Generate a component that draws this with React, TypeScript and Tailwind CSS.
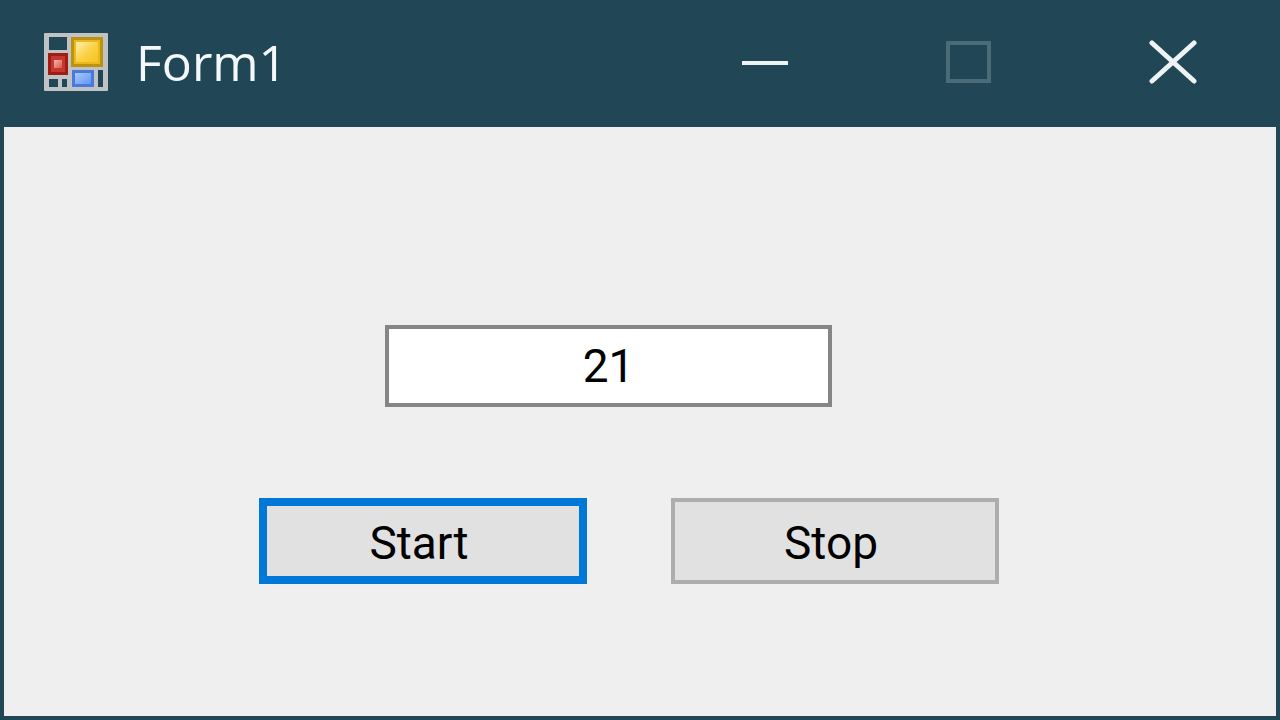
import React, { useEffect, useState } from 'react'

const FormIcon: React.FC = () => (
  <svg width="64" height="58" viewBox="0 0 64 58" aria-hidden="true">
    <defs>
      <linearGradient id="red" x1="0" y1="0" x2="1" y2="1">
        <stop offset="0" stopColor="#f5b5ad" />
        <stop offset="1" stopColor="#d9574e" />
      </linearGradient>
      <linearGradient id="yellow" x1="0" y1="0" x2="1" y2="1">
        <stop offset="0" stopColor="#fff0b0" />
        <stop offset="0.5" stopColor="#fbd348" />
        <stop offset="1" stopColor="#f7c21c" />
      </linearGradient>
      <linearGradient id="blue" x1="0" y1="0" x2="1" y2="1">
        <stop offset="0" stopColor="#a9c8ff" />
        <stop offset="1" stopColor="#6595f5" />
      </linearGradient>
    </defs>
    <rect width="64" height="58" rx="1" fill="#bfc3c6" />
    <rect x="5" y="4" width="18" height="13" fill="#214655" />
    <rect x="4" y="20" width="20" height="22" fill="#a01c14" />
    <rect x="7" y="23" width="14" height="16" fill="#c4392f" />
    <rect x="10" y="27" width="8" height="8" fill="url(#red)" />
    <rect x="27" y="4" width="32" height="30" fill="#bd920f" />
    <rect x="30" y="7" width="26" height="24" fill="#e9b91f" />
    <rect x="32" y="9" width="22" height="20" fill="url(#yellow)" />
    <rect x="28" y="37" width="22" height="17" fill="#4a79de" />
    <rect x="31" y="40" width="16" height="11" fill="url(#blue)" />
    <rect x="54" y="37" width="5" height="17" fill="#214655" />
    <rect x="5" y="46" width="9" height="8" fill="#214655" />
    <rect x="18" y="46" width="5" height="8" fill="#214655" />
  </svg>
)

interface CaptionButtonProps {
  label: string
  disabled?: boolean
  onClick?: () => void
  children: React.ReactNode
}

const CaptionButton: React.FC<CaptionButtonProps> = ({ label, disabled, onClick, children }) => (
  <button
    type="button"
    aria-label={label}
    disabled={disabled}
    onClick={onClick}
    className="flex h-full w-[204px] items-center justify-center text-[#eef3f5] disabled:text-[#4a6b78]"
  >
    <svg width="48" height="44" viewBox="0 0 48 44" fill="none" stroke="currentColor" strokeWidth="4">
      {children}
    </svg>
  </button>
)

export default function App() {
  const [count, setCount] = useState('21')
  const [running, setRunning] = useState(false)

  useEffect(() => {
    if (!running) return
    const timer = setInterval(() => setCount(value => String(Number(value) + 1)), 1000)
    return () => clearInterval(timer)
  }, [running])

  return (
    <div className="flex min-h-screen flex-col bg-[#214655] px-1 pb-1">
      <header className="flex h-[127px] items-center pr-px pb-[3px] pl-10">
        <FormIcon />
        <h1 className="ml-7 flex-1 font-['Open_Sans',sans-serif] text-[50px] leading-[60px] text-[#f4f8fa]">
          Form1
        </h1>
        <div className="flex h-full">
          <CaptionButton label="Minimize">
            <path d="M1 23H47" />
          </CaptionButton>
          <CaptionButton label="Maximize" disabled>
            <path d="M3 3H44V41H3Z" />
          </CaptionButton>
          <CaptionButton label="Close">
            <path d="M3 3L45 41M45 3L3 41" strokeWidth="5" strokeLinecap="round" />
          </CaptionButton>
        </div>
      </header>

      <main className="flex flex-1 flex-col items-start bg-[#efefef] pt-[198px] pb-10 font-[Roboto,sans-serif] text-[46px] leading-[52px] text-black">
        <input
          type="text"
          aria-label="Counter"
          value={count}
          onChange={event => setCount(event.target.value)}
          className="ml-[381px] h-[82px] w-[447px] border-4 border-[#868686] bg-white text-center outline-none"
        />
        <div className="mt-[91px] ml-[255px] flex gap-[84px]">
          <button
            type="button"
            onClick={() => setRunning(true)}
            className="h-[86px] w-[328px] border-8 border-[#0078d7] bg-[#e1e1e1] pt-1 pr-2"
          >
            Start
          </button>
          <button
            type="button"
            onClick={() => setRunning(false)}
            className="h-[86px] w-[328px] border-4 border-[#adadad] bg-[#e1e1e1] pt-1 pr-2"
          >
            Stop
          </button>
        </div>
      </main>
    </div>
  )
}
